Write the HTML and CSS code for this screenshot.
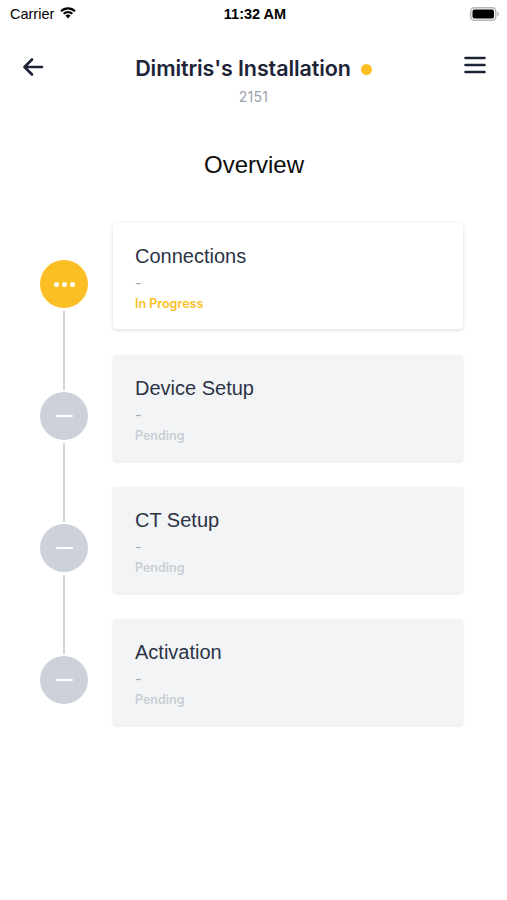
FILE: index.html
```html
<!DOCTYPE html>
<html>
<head>
<meta charset="utf-8">
<link rel="stylesheet" href="styles.css">
</head>
<body>
<div class="screen">
  <div class="statusbar">
    <div class="sb-left">Carrier
      <svg class="wifi" width="18" height="13" viewBox="0 0 18 13"><path d="M9 12.5 L6.4 9.6 A3.8 3.8 0 0 1 11.6 9.6 Z" fill="#000"/><path d="M3.9 7.1 A7.4 7.4 0 0 1 14.1 7.1 L12.6 8.6 A5.3 5.3 0 0 0 5.4 8.6 Z" fill="#000"/><path d="M1.3 4.5 A11 11 0 0 1 16.7 4.5 L15.2 6 A8.9 8.9 0 0 0 2.8 6 Z" fill="#000"/></svg>
    </div>
    <div class="sb-time">11:32 AM</div>
    <div class="sb-right">
      <svg width="30" height="14" viewBox="0 0 30 14"><rect x="0.75" y="0.75" width="25" height="12.5" rx="3.5" fill="none" stroke="#b5b5b5" stroke-width="1.5"/><rect x="2.5" y="2.5" width="21.5" height="9" rx="2" fill="#000"/><path d="M27.3 4.8 Q29 5.2 29 7 Q29 8.8 27.3 9.2 Z" fill="#b5b5b5"/></svg>
    </div>
  </div>

  <header class="topbar">
    <button class="icon-btn back" aria-label="Back">
      <svg width="22" height="20" viewBox="0 0 22 20"><path d="M20 10 H3 M10 2.5 L2.5 10 L10 17.5" fill="none" stroke="#1e2437" stroke-width="2.6" stroke-linecap="round" stroke-linejoin="round"/></svg>
    </button>
    <div class="title-wrap">
      <div class="title">Dimitris's Installation<span class="status-dot"></span></div>
      <div class="subtitle">2151</div>
    </div>
    <button class="icon-btn menu" aria-label="Menu">
      <svg width="22" height="18" viewBox="0 0 22 18"><path d="M1.5 2 H20.5 M1.5 9 H20.5 M1.5 16 H20.5" fill="none" stroke="#1e2437" stroke-width="2.6" stroke-linecap="round"/></svg>
    </button>
  </header>

  <h1 class="section-title">Overview</h1>

  <ol class="steps">
    <li class="step first active">
      <div class="rail">
        <span class="seg top"></span>
        <span class="node"><span class="dots"><i></i><i></i><i></i></span></span>
        <span class="seg bottom"></span>
      </div>
      <div class="card">
        <div class="card-title">Connections</div>
        <div class="card-dash">-</div>
        <div class="card-status progress">In Progress</div>
      </div>
    </li>
    <li class="step pending">
      <div class="rail">
        <span class="seg top"></span>
        <span class="node"><span class="minus"></span></span>
        <span class="seg bottom"></span>
      </div>
      <div class="card">
        <div class="card-title">Device Setup</div>
        <div class="card-dash">-</div>
        <div class="card-status">Pending</div>
      </div>
    </li>
    <li class="step pending">
      <div class="rail">
        <span class="seg top"></span>
        <span class="node"><span class="minus"></span></span>
        <span class="seg bottom"></span>
      </div>
      <div class="card">
        <div class="card-title">CT Setup</div>
        <div class="card-dash">-</div>
        <div class="card-status">Pending</div>
      </div>
    </li>
    <li class="step pending last">
      <div class="rail">
        <span class="seg top"></span>
        <span class="node"><span class="minus"></span></span>
        <span class="seg bottom"></span>
      </div>
      <div class="card">
        <div class="card-title">Activation</div>
        <div class="card-dash">-</div>
        <div class="card-status">Pending</div>
      </div>
    </li>
  </ol>
</div>
</body>
</html>
```

FILE: styles.css
```css
* { box-sizing: border-box; }
html, body { margin: 0; padding: 0; background: #fff; }
body { font-family: "Inter", "Liberation Sans", sans-serif; color: #1e2437; }
.screen { width: 507px; min-height: 900px; background: #fff; }

.statusbar {
  height: 28px;
  display: grid;
  grid-template-columns: 1fr auto 1fr;
  align-items: center;
  padding: 0 7px 0 10px;
  font-family: "Liberation Sans", "Inter", sans-serif;
  font-size: 14.5px;
  color: #000;
}
.sb-left { display: flex; align-items: center; gap: 5px; }
.wifi { margin-top: -3px; }
.sb-time { font-weight: 700; font-size: 14.5px; }
.sb-right { display: flex; justify-content: flex-end; }

.topbar {
  display: grid;
  grid-template-columns: 64px 1fr 64px;
  align-items: start;
  padding-top: 26px;
  height: 118px;
}
.icon-btn {
  border: 0; background: none; padding: 0; margin: 0;
  display: flex; cursor: pointer;
}
.back { margin: 3px 0 0 22px; justify-self: start; }
.menu { margin: 2px 21px 0 0; justify-self: end; }
.title-wrap { text-align: center; }
.title {
  font-size: 21.5px;
  font-weight: 600;
  letter-spacing: -0.1px;
  line-height: 28px;
  color: #1e2437;
  display: inline-flex;
  align-items: center;
}
.status-dot {
  width: 11px; height: 11px; border-radius: 50%;
  background: #fbbf24;
  margin-left: 10px;
  margin-top: 2px;
}
.subtitle {
  margin-top: 6px;
  font-size: 14px;
  color: #9aa1ad;
  letter-spacing: 0.3px;
}

.section-title {
  margin: 4px 0 0 0;
  text-align: center;
  font-family: "Liberation Sans", sans-serif;
  font-weight: 400;
  font-size: 24px;
  line-height: 30px;
  color: #0d0d0d;
  padding-left: 1px;
}

.steps {
  list-style: none;
  margin: 43px 0 0 0;
  padding: 0;
}
.step {
  display: flex;
  align-items: stretch;
}
.rail {
  width: 48px;
  margin-left: 40px;
  margin-right: 25px;
  display: flex;
  flex-direction: column;
  align-items: center;
}
.seg { width: 2px; background: #d3d6dd; }
.seg.top { height: 35px; margin-bottom: 2px; }
.seg.bottom { flex: 1; margin-top: 3px; }
.first .seg.top { visibility: hidden; }
.last .seg.bottom { visibility: hidden; }
.node {
  width: 48px; height: 48px; border-radius: 50%;
  display: flex; align-items: center; justify-content: center;
  background: #cdd1da;
  flex: none;
}
.active .node { background: #fbbf24; }
.dots { display: flex; gap: 3px; }
.dots i { width: 5px; height: 5px; border-radius: 50%; background: #fff; display: block; }
.minus { width: 17px; height: 2.5px; border-radius: 2px; background: #fff; }

.card {
  width: 350px;
  height: 106px;
  margin-bottom: 26px;
  border-radius: 3px;
  background: #f3f4f6;
  box-shadow: 0 1px 3px rgba(0,0,0,0.10);
  padding: 20px 22px 0 22px;
}
.last .card { margin-bottom: 0; }
.active .card { background: #fff; box-shadow: 0 1px 4px rgba(0,0,0,0.14); }
.card-title {
  font-family: "Liberation Sans", sans-serif;
  font-size: 20px;
  line-height: 26px;
  color: #2b3345;
}
.card-dash {
  font-size: 14px;
  color: #a3a8b2;
  line-height: 18px;
  margin-top: 5px;
}
.card-status {
  font-size: 12.5px;
  font-weight: 600;
  color: #c9ced6;
  line-height: 16px;
  margin-top: 4px;
}
.card-status.progress { color: #fbbf24; }
```
